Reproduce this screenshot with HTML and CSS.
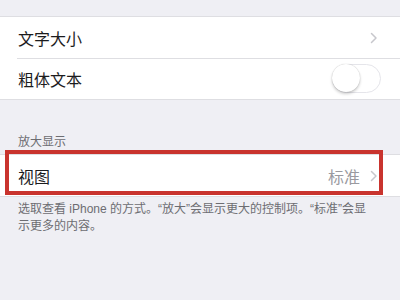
FILE: index.html
```html
<!DOCTYPE html>
<html lang="zh-CN">
<head>
<meta charset="utf-8">
<link rel="stylesheet" href="styles.css">
</head>
<body>
<div class="page">
  <div class="top-gap"></div>
  <div class="group">
    <div class="row">
      <span class="label">文字大小</span>
      <svg class="chev" width="8" height="12" viewBox="0 0 8 12"><path d="M1.5 1.5 L6 6 L1.5 10.5" fill="none" stroke="#c7c7cc" stroke-width="1.5" stroke-linecap="round" stroke-linejoin="round"/></svg>
    </div>
    <div class="row sep">
      <span class="label">粗体文本</span>
      <span class="toggle"><span class="knob"></span></span>
    </div>
  </div>
  <div class="section-header">放大显示</div>
  <div class="group">
    <div class="row highlighted">
      <span class="label">视图</span>
      <span class="value">标准</span>
      <svg class="chev" width="8" height="12" viewBox="0 0 8 12"><path d="M1.5 1.5 L6 6 L1.5 10.5" fill="none" stroke="#c7c7cc" stroke-width="1.5" stroke-linecap="round" stroke-linejoin="round"/></svg>
    </div>
  </div>
  <div class="footer">选取查看 iPhone 的方式。“放大”会显示更大的控制项。“标准”会显示更多的内容。</div>
</div>
</body>
</html>
```
FILE: styles.css
```css
* { box-sizing: border-box; }
html, body {
  margin: 0;
  padding: 0;
  background: #efeff4;
}
body {
  font-family: "Liberation Sans", "Noto Sans CJK SC", sans-serif;
  width: 400px;
  height: 300px;
  overflow: hidden;
}
.top-gap { height: 16px; }
.group {
  background: #fff;
  border-top: 1px solid #dedee2;
  border-bottom: 1px solid #dedee2;
}
.row {
  position: relative;
  height: 41px;
  display: flex;
  align-items: center;
  padding: 0 22px 0 18px;
}
.row.sep::before {
  content: "";
  position: absolute;
  top: 0;
  left: 17px;
  right: 0;
  border-top: 1px solid #dedee2;
}
.label {
  flex: 1;
  font-size: 16px;
  color: #1c1c1e;
}
.chev { display: block; }
.toggle {
  position: relative;
  width: 49px;
  height: 29px;
  border-radius: 15px;
  border: 1.5px solid #e5e5ea;
  background: #fff;
  margin-right: -3px;
}
.knob {
  position: absolute;
  left: -1px;
  top: -1px;
  width: 28px;
  height: 28px;
  border-radius: 50%;
  background: #fff;
  box-shadow: 0 2px 3px rgba(0,0,0,0.2), 0 0 1px rgba(0,0,0,0.25);
}
.section-header {
  padding: 35px 18px 4px;
  font-size: 12px;
  line-height: 15px;
  color: #6d6d72;
}
.row.highlighted { height: 41px; }
.highlighted::after {
  content: "";
  position: absolute;
  left: 5px;
  right: 17px;
  top: -5px;
  bottom: 1px;
  border: 4px solid #c9342e;
}
.value {
  font-size: 16px;
  color: #9a9aa0;
  margin-right: 10px;
}
.footer {
  padding: 4px 26px 0 18px;
  font-size: 12px;
  line-height: 17px;
  color: #6d6d72;
}
```
